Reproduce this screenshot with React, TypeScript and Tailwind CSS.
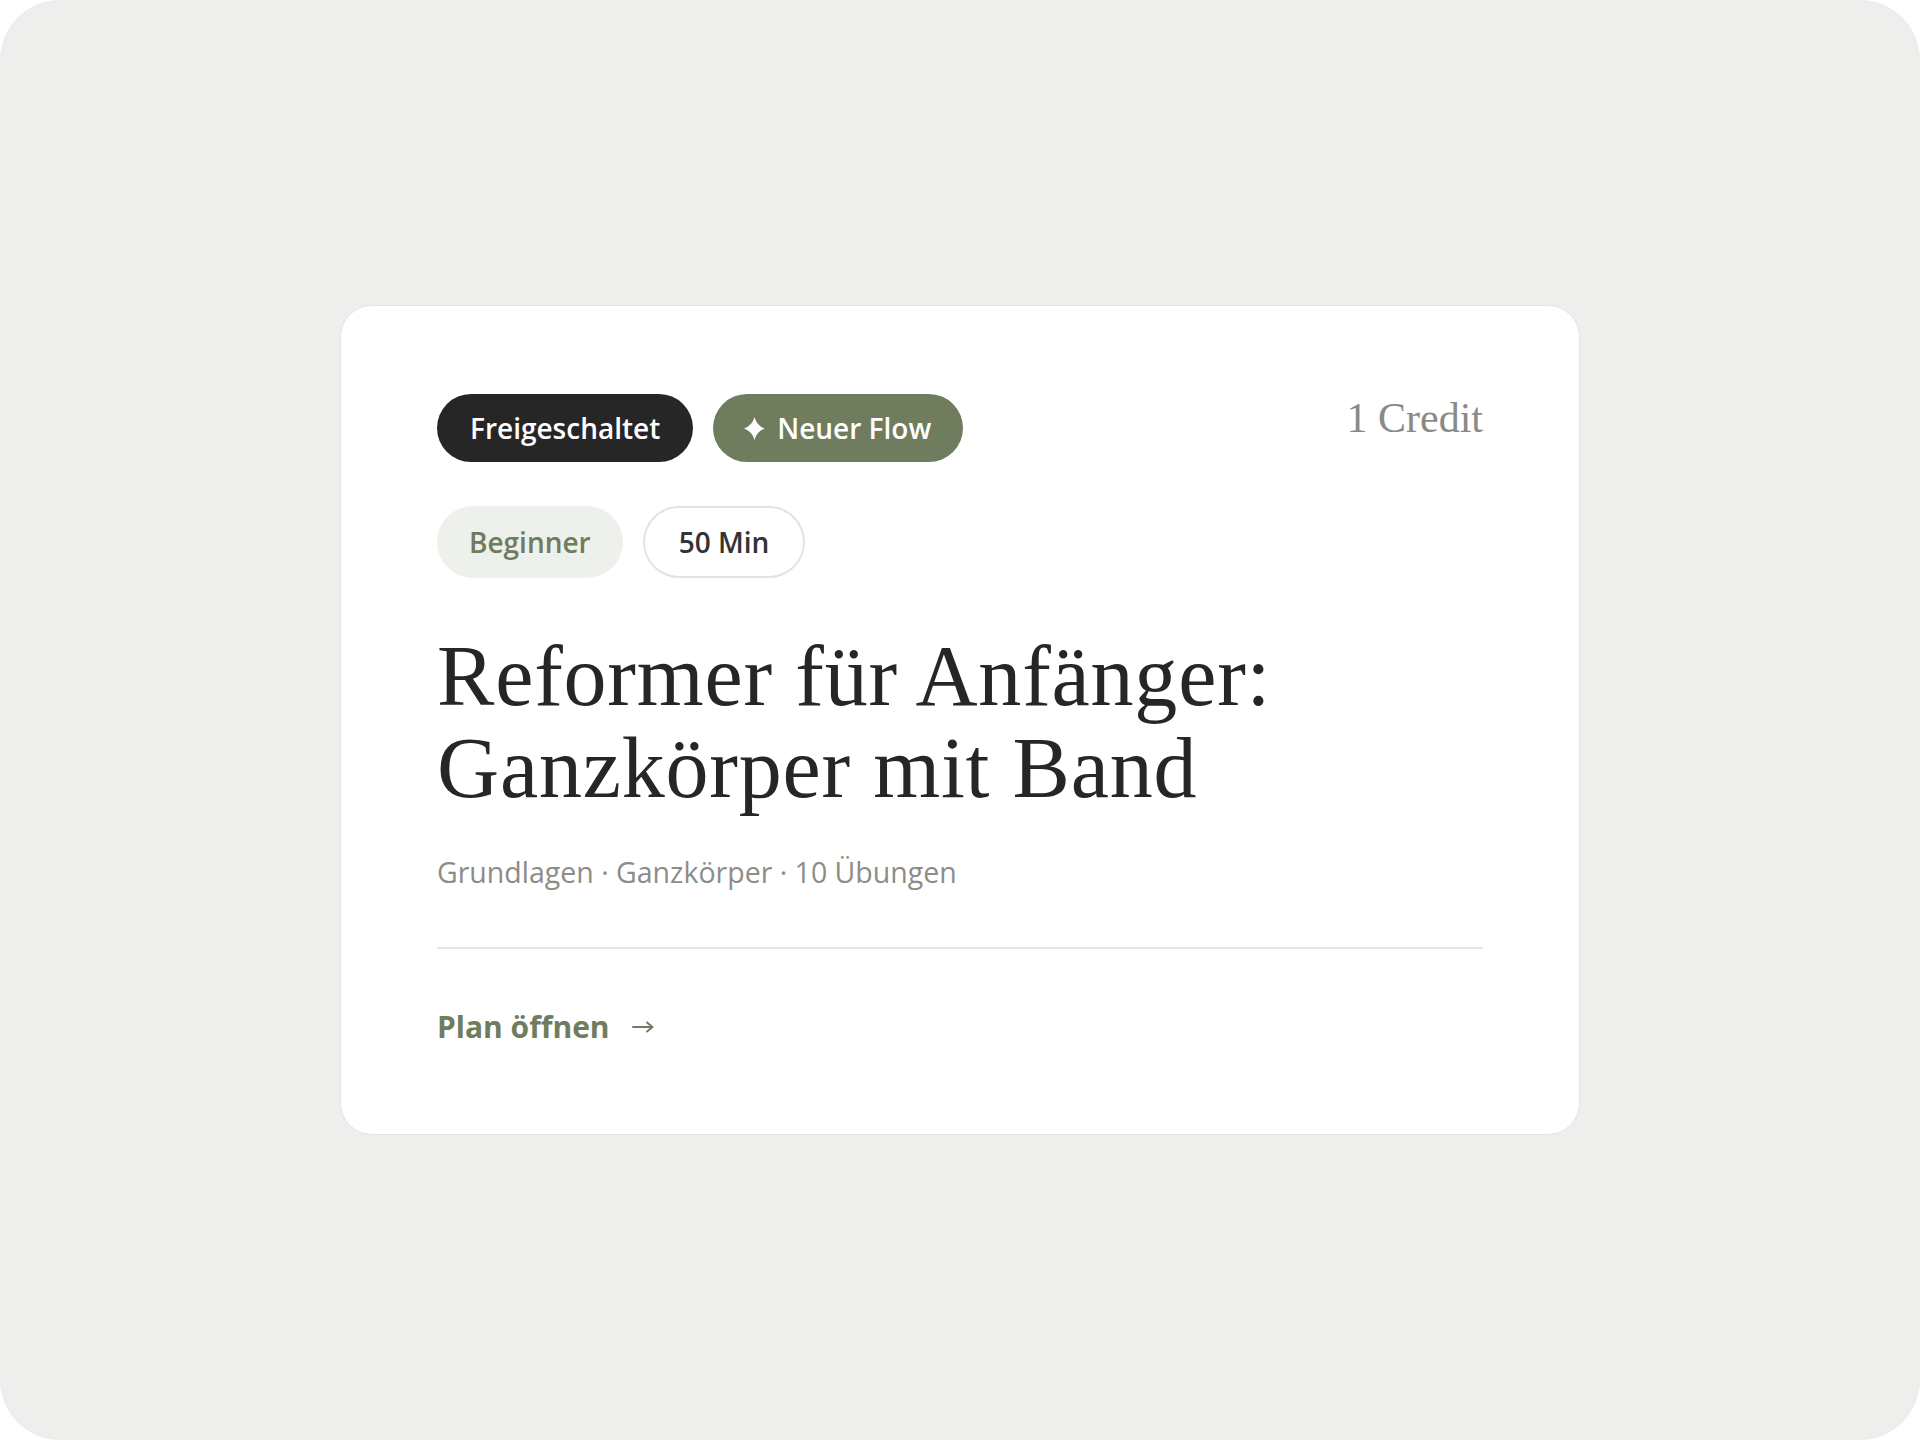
import React from "react";

const sans = { fontFamily: '"Open Sans", "Noto Sans", sans-serif' };

function Sparkle() {
  return (
    <svg width="21" height="23" viewBox="0 0 24 26" className="shrink-0">
      <path
        d="M12 0 Q15 10 24 13 Q15 16 12 26 Q9 16 0 13 Q9 10 12 0 Z"
        fill="#ffffff"
      />
    </svg>
  );
}

function Arrow() {
  return (
    <svg width="22" height="14" viewBox="0 0 22 14" className="shrink-0">
      <path d="M1 7 H20" stroke="#6f7c5d" strokeWidth="2" strokeLinecap="round" />
      <path d="M15 2.5 L20.5 7 L15 11.5" stroke="#6f7c5d" strokeWidth="2" fill="none" strokeLinecap="round" strokeLinejoin="round" />
    </svg>
  );
}

export default function App() {
  return (
    <div className="w-[1920px] h-[1440px] bg-white">
      <div className="w-full h-full rounded-[60px] bg-[#eeefec] flex items-center justify-center">
        <div className="w-[1240px] rounded-[32px] border border-[#e3e5e1] bg-white px-[96px] pt-[88px] pb-[89px]">
          <div className="flex items-start justify-between">
            <div className="flex gap-5" style={sans}>
              <span className="h-[68px] px-[33px] rounded-full bg-[#262626] text-white text-[28px] font-semibold flex items-center">
                Freigeschaltet
              </span>
              <span className="h-[68px] pl-[31px] pr-[32px] rounded-full bg-[#6f7c5d] text-white text-[28px] font-semibold flex items-center gap-[12px]">
                <Sparkle />
                Neuer Flow
              </span>
            </div>
            <div
              className="text-[42px] leading-[48px] text-[#8a8a86]"
              style={{ fontFamily: '"Liberation Serif", serif' }}
            >
              1 Credit
            </div>
          </div>

          <div className="mt-[44px] flex gap-5" style={sans}>
            <span className="h-[72px] px-[32px] rounded-full bg-[#eef0ec] text-[#6f7c5d] text-[28px] font-semibold flex items-center">
              Beginner
            </span>
            <span className="h-[72px] px-[34px] rounded-full border-2 border-[#e1e5df] bg-white text-[#333333] text-[28px] font-semibold flex items-center">
              50 Min
            </span>
          </div>

          <h1
            className="mt-[52px] text-[86px] leading-[92px] tracking-[0.8px] text-[#262626] font-normal"
            style={{ fontFamily: '"Liberation Serif", serif' }}
          >
            Reformer für Anfänger:
            <br />
            Ganzkörper mit Band
          </h1>

          <p className="mt-[40px] text-[28.5px] leading-[36px] text-[#8c8c88]" style={sans}>
            Grundlagen · Ganzkörper · 10 Übungen
          </p>

          <div className="mt-[57px] h-[2px] bg-[#e5e7e3]" />

          <div className="mt-[60px] flex items-center gap-[22px]" style={sans}>
            <span className="text-[30px] leading-[36px] font-bold text-[#6f7c5d]">Plan öffnen</span>
            <Arrow />
          </div>
        </div>
      </div>
    </div>
  );
}
